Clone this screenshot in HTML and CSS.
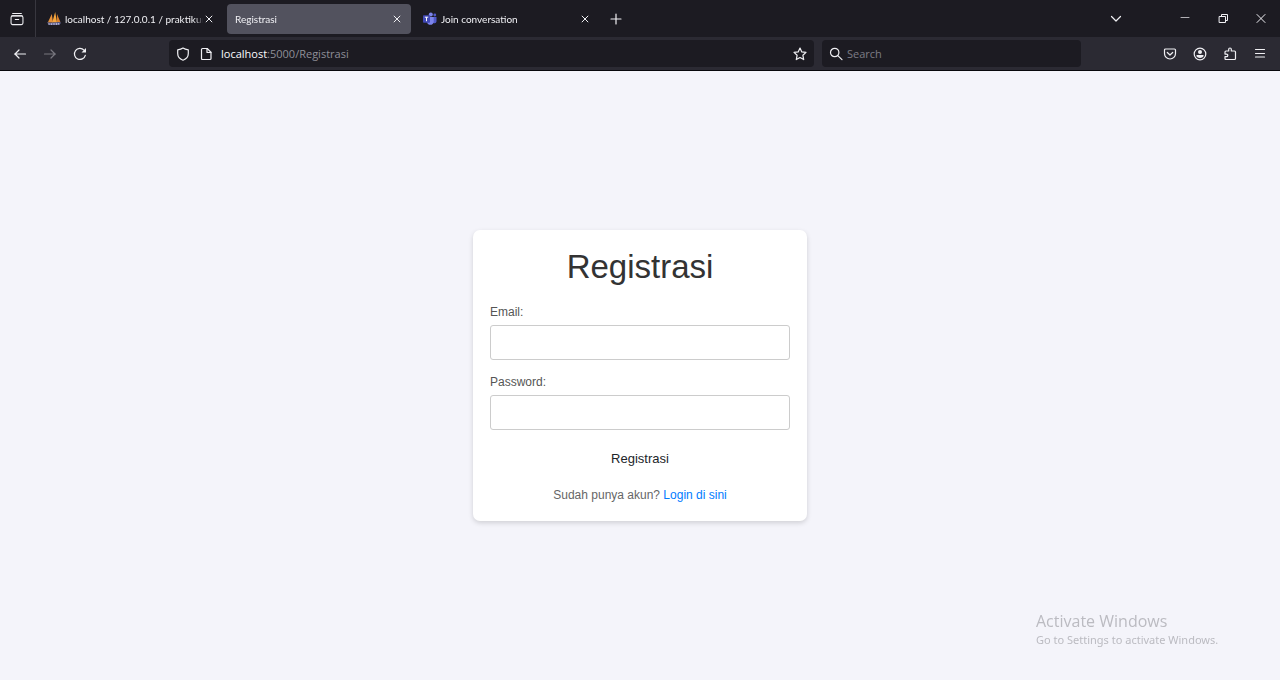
FILE: index.html
```html
<!DOCTYPE html>
<html lang="id">
<head>
<meta charset="utf-8">
<meta name="viewport" content="width=device-width, initial-scale=1">
<title>Registrasi</title>
<link rel="stylesheet" href="styles.css">
</head>
<body>
<header class="browser">
  <div class="tabbar">
    <button class="view-button" aria-label="Firefox View">
      <svg class="icon" viewBox="0 0 16 16"><path d="M3 1.6h10M2.2 4.2h11.6"/><rect x="1.2" y="4.4" width="13.6" height="10" rx="1.8"/><path d="M6 8.5h4"/></svg>
    </button>
    <ul class="tabs">
      <li class="tab">
        <svg class="favicon" viewBox="0 0 14 14"><path d="M.8 10.500 4.800 2l1.200 8.500z" fill="#e8923a"/><path d="M5.200 10.500 8.200 0l1.800 10.500z" fill="#f6a63c"/><path d="M9.800 10 10 2l3.400 8z" fill="#d9812c"/><path d="M0 10.300c4 1 9-.6 14 .2l-1.500 2.500H2z" fill="#6b6c9b"/><path d="M2 11.300v1.700M4.500 11.300v1.700M7 11v2M9.500 11v2M11.500 11v1.500" stroke="#c4c4da" stroke-width=".8"/></svg>
        <button class="tab-title">localhost / 127.0.0.1 / praktikum</button>
        <button class="tab-close" aria-label="Tutup tab"><svg viewBox="0 0 8 8"><path d="m.8.800 6.400 6.400m0-6.400L.8 7.200"/></svg></button>
      </li>
      <li class="tab tab-active">
        <button class="tab-title">Registrasi</button>
        <button class="tab-close" aria-label="Tutup tab"><svg viewBox="0 0 8 8"><path d="m.8.800 6.400 6.400m0-6.400L.8 7.200"/></svg></button>
      </li>
      <li class="tab">
        <svg class="favicon" viewBox="0 0 14 14"><circle cx="7.800" cy="2.500" r="2" fill="#7b83eb"/><circle cx="11.800" cy="3" r="1.400" fill="#5059c9"/><path d="M9.500 5h4v4.500a2.300 2.300 0 0 1-4 1z" fill="#5059c9"/><path d="M4 5h6.700v5A3.400 3.400 0 0 1 4 10z" fill="#7b83eb"/><rect y="3.300" width="7" height="7.400" rx=".8" fill="#4048b5"/><path d="M1.800 5.200h3.400M3.500 5.200v4" stroke="#fff"/></svg>
        <button class="tab-title">Join conversation</button>
        <button class="tab-close" aria-label="Tutup tab"><svg viewBox="0 0 8 8"><path d="m.8.800 6.400 6.400m0-6.400L.8 7.200"/></svg></button>
      </li>
    </ul>
    <button class="tool new-tab" aria-label="Tab baru"><svg class="icon" viewBox="0 0 14 14"><path d="M7 2v10M2 7h10"/></svg></button>
    <button class="tool all-tabs" aria-label="Daftar tab"><svg class="icon" viewBox="0 0 14 14"><path d="m2.500 4.500 4.500 4.500 4.500-4.500"/></svg></button>
    <div class="window-controls">
      <button class="window-button" aria-label="Minimize"><svg class="icon thin" viewBox="0 0 14 14"><path d="M3 5.500h8"/></svg></button>
      <button class="window-button" aria-label="Restore"><svg class="icon" viewBox="0 0 14 14"><rect x="3.500" y="4.500" width="6" height="6"/><path d="M5.500 4.500v-2h6v6h-2"/></svg></button>
      <button class="window-button" aria-label="Close"><svg class="icon" viewBox="0 0 14 14"><path d="m3 2.500 8 8m0-8-8 8"/></svg></button>
    </div>
  </div>
  <div class="toolbar">
    <button class="tool" aria-label="Kembali"><svg class="icon" viewBox="0 0 14 14"><path d="M12.500 7h-11m4.500-4L2 7l4 4"/></svg></button>
    <button class="tool" aria-label="Maju" disabled><svg class="icon" viewBox="0 0 14 14"><path d="M1.500 7h11M8 3l4 4-4 4"/></svg></button>
    <button class="tool" aria-label="Muat ulang"><svg class="icon" viewBox="0 0 14 14"><path d="M12.300 8.300A5.500 5.500 0 1 1 11 3.200l1.200 1.200"/><path d="M13 1v4.500H8.500z" fill="currentColor" stroke="none"/></svg></button>
    <div class="spacer"></div>
    <div class="urlbar">
      <svg class="icon" viewBox="0 0 14 14"><path d="M7 1c1.500 1 3.300 1.500 5.300 1.800v3.700c0 3-2 5.500-5.300 6.700-3.300-1.200-5.300-3.700-5.300-6.700V2.800C3.700 2.500 5.500 2 7 1z"/></svg>
      <svg class="icon page-icon" viewBox="0 0 14 14"><path d="M3.500 1.500h4.700L12 5.200v6.300c0 .6-.4 1-1 1H3.500c-.6 0-1-.4-1-1v-9c0-.6.4-1 1-1z"/><path d="M8 1.500v4h4"/></svg>
      <a class="address" href="#"><span class="host">localhost</span>:5000/Registrasi</a>
      <button class="tool bookmark" aria-label="Tandai"><svg class="icon" viewBox="0 0 14 14"><path d="m7 1 1.800 3.900 4.200.5-3.100 2.900.8 4.300L7 10.500l-3.700 2.100.8-4.300L1 5.400l4.200-.5z"/></svg></button>
    </div>
    <label class="searchbar">
      <svg class="icon" viewBox="0 0 14 14"><circle cx="5.700" cy="5.500" r="4.200"/><path d="m8.800 8.600 4.200 4"/></svg>
      <input class="search-input" type="text" placeholder="Search" aria-label="Search">
    </label>
    <div class="spacer"></div>
    <button class="tool" aria-label="Pocket"><svg class="icon" viewBox="0 0 14 14"><path d="M2.500 2h9c.6 0 1 .4 1 1v3.500a5.500 5.500 0 0 1-11 0V3c0-.6.4-1 1-1z"/><path d="M4.300 5.500 7 8l2.700-2.500"/></svg></button>
    <button class="tool" aria-label="Akun"><svg class="icon" viewBox="0 0 14 14"><circle cx="7" cy="7" r="5.800"/><circle cx="7" cy="5" r="2" fill="currentColor" stroke="none"/><path d="M3.500 8h7v1.300c-.8 1.200-2 1.700-3.500 1.700s-2.700-.5-3.500-1.700z" fill="currentColor" stroke="none"/></svg></button>
    <button class="tool" aria-label="Ekstensi"><svg class="icon" viewBox="0 0 14 14"><path d="M2 6V5c0-.6.400-1 1-1h2.700V2.300a1.300 1.300 0 0 1 2.600 0V4h3.200c.6 0 1 .4 1 1v6.500c0 .6-.4 1-1 1H3c-.6 0-1-.4-1-1V9.700h1.500a1.300 1.300 0 0 0 0-2.600H2z"/></svg></button>
    <button class="tool" aria-label="Menu"><svg class="icon" viewBox="0 0 14 14"><path d="M2.500 2.500h9M2.500 6.500h9M2.500 10h9"/></svg></button>
  </div>
</header>
<main class="page">
  <form class="card">
    <h1 class="title">Registrasi</h1>
    <label class="label" for="email">Email:</label>
    <input class="field" id="email" type="email">
    <label class="label" for="password">Password:</label>
    <input class="field" id="password" type="password">
    <button class="submit" type="button">Registrasi</button>
    <p class="hint">Sudah punya akun? <a class="link" href="#">Login di sini</a></p>
  </form>
</main>
<aside class="watermark">
  <p class="watermark-title">Activate Windows</p>
  <p class="watermark-text">Go to Settings to activate Windows.</p>
</aside>
</body>
</html>
```
FILE: styles.css
```css
* {
  box-sizing: border-box;
}

body {
  margin: 0;
  min-height: 100vh;
  display: flex;
  flex-direction: column;
  background: #f4f4fa;
  font-family: "Liberation Sans", Arial, sans-serif;
}

button {
  margin: 0;
  padding: 0;
  border: 0;
  background: none;
  color: inherit;
  font: inherit;
}

/* Browser chrome */
.browser {
  border-bottom: 1px solid #08080c;
  background: #2b2a33;
  color: #f0f0f4;
  font-family: Lato, "Open Sans", sans-serif;
  font-size: 10px;
}

.tabbar {
  display: flex;
  align-items: center;
  height: 37px;
  background: #1c1b22;
}

.view-button {
  display: grid;
  place-items: center;
  flex: none;
  width: 36px;
  height: 37px;
  padding-right: 2px;
  border-right: 1px solid #38373f;
}

.tabs {
  display: flex;
  gap: 4px;
  margin: 0;
  padding: 0 0 0 3px;
  list-style: none;
}

.tab {
  display: flex;
  align-items: center;
  gap: 4px;
  width: 184px;
  height: 30px;
  padding: 0 6px 0 8px;
  border-radius: 4px;
}

.tab-active {
  background: #52525e;
}

.favicon {
  flex: none;
  width: 14px;
  height: 14px;
}

.tab-title {
  flex: 1;
  min-width: 0;
  overflow: hidden;
  line-height: 16px;
  white-space: nowrap;
  text-align: left;
  mask-image: linear-gradient(to left, transparent, #000 8px);
}

.tab-close {
  display: grid;
  place-items: center;
  flex: none;
  width: 16px;
  height: 16px;
  margin-left: -6px;
}

.tab-close svg {
  width: 8px;
  height: 8px;
  stroke: currentColor;
}

.icon {
  display: block;
  flex: none;
  width: 14px;
  height: 14px;
  fill: none;
  stroke: currentColor;
  stroke-width: 1.2;
  stroke-linecap: round;
  stroke-linejoin: round;
}

.thin {
  stroke-width: 1;
  opacity: 0.7;
}

.tool {
  display: grid;
  place-items: center;
  flex: none;
  width: 30px;
  height: 28px;
}

.tool:disabled {
  color: #78777f;
}

.new-tab {
  margin-left: 2px;
}

.all-tabs {
  margin-left: auto;
}

.window-controls {
  display: flex;
  margin-left: 35px;
}

.window-button {
  display: grid;
  place-items: center;
  width: 38px;
  height: 37px;
}

.window-button .icon {
  stroke-width: 1;
}

.toolbar {
  display: flex;
  align-items: center;
  height: 33px;
  padding: 0 5px;
}

.spacer {
  flex: 74 1 0;
}

.urlbar,
.searchbar {
  display: flex;
  align-items: center;
  height: 27px;
  padding-left: 7px;
  border-radius: 4px;
  background: #1c1b22;
  font-family: "Open Sans", "Noto Sans", sans-serif;
  font-size: 11px;
}

.urlbar {
  flex: 638 1 0;
}

.page-icon {
  margin: 0 8px 0 9px;
}

.address {
  flex: 1;
  color: #8f8f98;
  text-decoration: none;
}

.host {
  color: #fbfbfe;
}

.bookmark {
  width: 28px;
}

.searchbar {
  flex: 252 1 0;
  gap: 4px;
  min-width: 0;
  margin-left: 8px;
}

.search-input {
  flex: 1;
  min-width: 0;
  padding: 0;
  border: 0;
  outline: 0;
  background: none;
  color: #fbfbfe;
  font: inherit;
}

.search-input::placeholder {
  color: #7d7c85;
  opacity: 1;
}

/* Registration page */
.page {
  flex: 1;
  display: flex;
  align-items: center;
  justify-content: center;
}

.card {
  display: flex;
  flex-direction: column;
  width: 334px;
  padding: 17px;
  border-radius: 7px;
  background: #fff;
  box-shadow: 0 2px 5px rgba(0, 0, 0, 0.15);
}

.title {
  margin: 0 0 16px;
  color: #333;
  font-size: 33px;
  font-weight: 400;
  line-height: 40px;
  text-align: center;
}

.label {
  margin-bottom: 4px;
  color: #555;
  font-size: 12px;
  line-height: 18px;
}

.field {
  width: 100%;
  height: 35px;
  margin: 0 0 13px;
  padding: 0 8px;
  border: 1px solid #ccc;
  border-radius: 3px;
  background: #fff;
  font: inherit;
  font-size: 13px;
}

.submit {
  height: 30px;
  color: #212529;
  font-size: 13px;
}

.hint {
  margin: 13px 0 0;
  color: #666;
  font-size: 12px;
  line-height: 18px;
  text-align: center;
}

.link {
  color: #007bff;
  text-decoration: none;
}

/* System notice over the page */
.watermark {
  position: fixed;
  right: 54px;
  bottom: 31px;
  width: 190px;
  color: #bbbbc1;
  font-family: "Open Sans", "Noto Sans", sans-serif;
  white-space: nowrap;
  pointer-events: none;
}

.watermark p {
  margin: 0;
}

.watermark-title {
  font-size: 16px;
  line-height: 20px;
}

.watermark-text {
  font-family: "Noto Sans", "Open Sans", sans-serif;
  font-size: 11px;
  line-height: 18px;
}
```
